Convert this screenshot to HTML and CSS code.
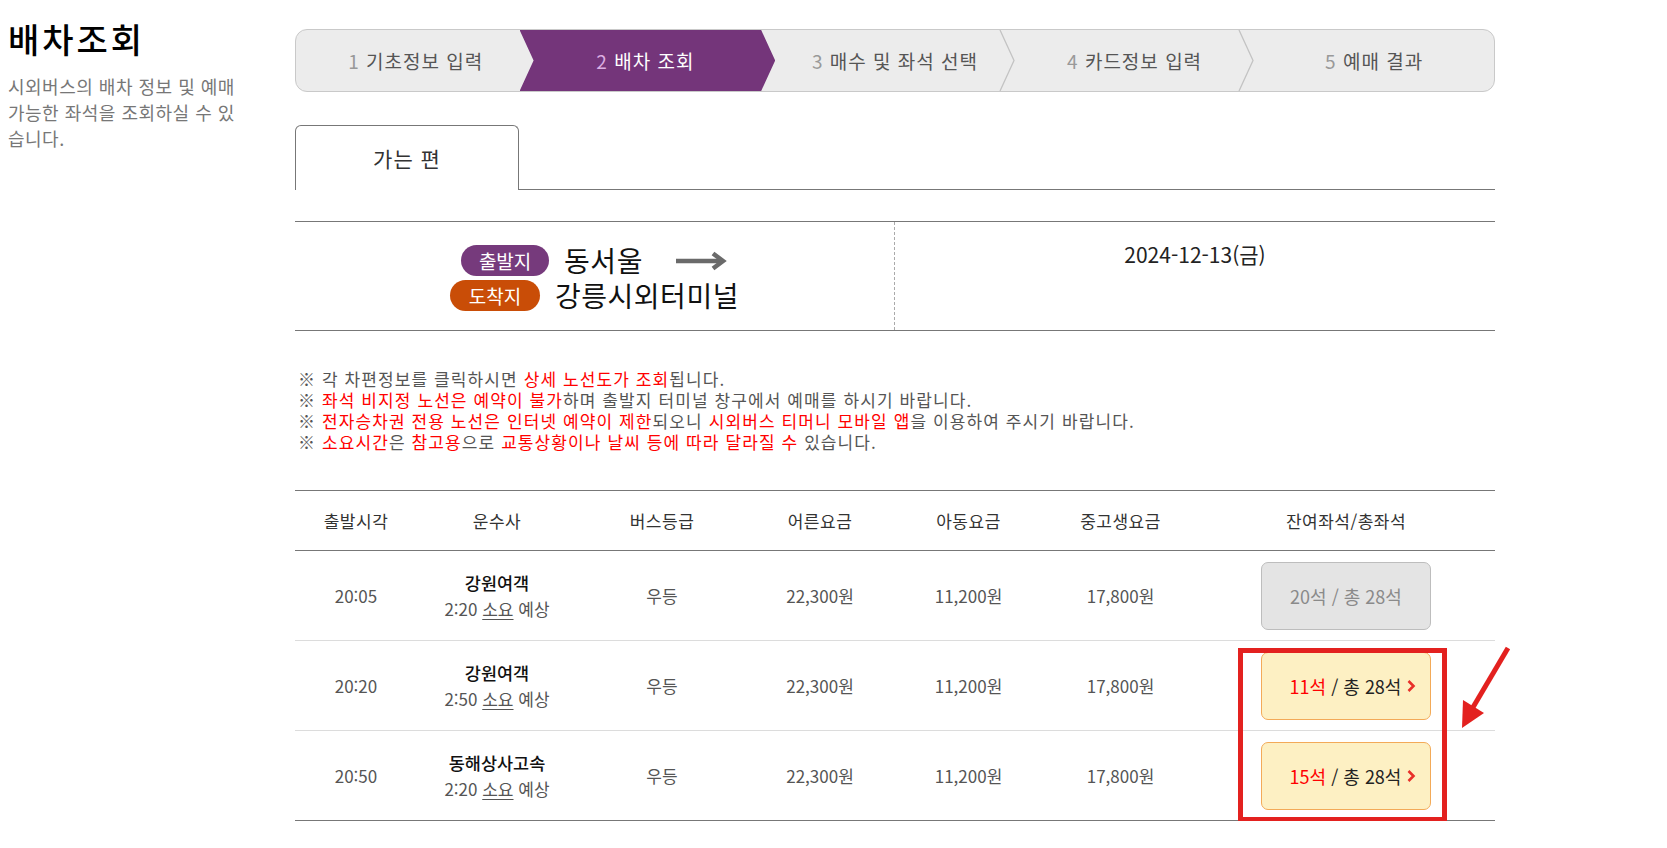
FILE: index.html
```html
<!DOCTYPE html>
<html lang="ko">
<head>
<meta charset="utf-8">
<title>배차조회</title>
<link rel="stylesheet" href="styles.css">
</head>
<body>
<div class="page">
  <aside class="side">
    <h1 class="side-title">배차조회</h1>
    <p class="side-desc">시외버스의 배차 정보 및 예매 가능한 좌석을 조회하실 수 있습니다.</p>
  </aside>
  <main class="main">
    <ol class="steps">
      <li class="step"><span class="step-label"><span class="num">1</span> 기초정보 입력</span><svg class="sep" viewBox="0 0 16 61" preserveAspectRatio="none"><polyline points="1,0 15,30.5 1,61"/></svg></li>
      <li class="step active"><span class="step-label"><span class="num">2</span> 배차 조회</span></li>
      <li class="step"><span class="step-label"><span class="num">3</span> 매수 및 좌석 선택</span><svg class="sep" viewBox="0 0 16 61" preserveAspectRatio="none"><polyline points="1,0 15,30.5 1,61"/></svg></li>
      <li class="step"><span class="step-label"><span class="num">4</span> 카드정보 입력</span><svg class="sep" viewBox="0 0 16 61" preserveAspectRatio="none"><polyline points="1,0 15,30.5 1,61"/></svg></li>
      <li class="step"><span class="step-label"><span class="num">5</span> 예매 결과</span></li>
    </ol>

    <div class="tabs"><div class="tab">가는 편</div></div>

    <div class="route">
      <div class="route-left">
        <div class="route-row">
          <span class="pill dep">출발지</span>
          <span class="place">동서울</span>
          <svg class="route-arrow" viewBox="0 0 52 20"><line x1="0" y1="10" x2="46" y2="10"/><polyline points="37,2.5 47,10 37,17.5"/></svg>
        </div>
        <div class="route-row">
          <span class="pill arr">도착지</span>
          <span class="place">강릉시외터미널</span>
        </div>
      </div>
      <div class="route-right">
        <div class="date">2024-12-13(금)</div>
      </div>
    </div>

    <ul class="notes">
      <li>※ 각 차편정보를 클릭하시면 <em>상세 노선도가 조회</em>됩니다.</li>
      <li>※ <em>좌석 비지정 노선은 예약이 불가</em>하며 출발지 터미널 창구에서 예매를 하시기 바랍니다.</li>
      <li>※ <em>전자승차권 전용 노선은 인터넷 예약이 제한</em>되오니 <em>시외버스 티머니 모바일 앱</em>을 이용하여 주시기 바랍니다.</li>
      <li>※ <em>소요시간</em>은 <em>참고용</em>으로 <em>교통상황이나 날씨 등에 따라 달라질 수</em> 있습니다.</li>
    </ul>

    <div class="table-wrap">
      <table class="bus-table">
        <colgroup>
          <col class="c-time"><col class="c-comp"><col class="c-grade"><col class="c-adult"><col class="c-child"><col class="c-teen"><col class="c-seat">
        </colgroup>
        <thead>
          <tr><th>출발시각</th><th>운수사</th><th>버스등급</th><th>어른요금</th><th>아동요금</th><th>중고생요금</th><th>잔여좌석/총좌석</th></tr>
        </thead>
        <tbody>
          <tr>
            <td>20:05</td>
            <td><div class="comp">강원여객</div><div class="dur">2:20 <u>소요</u> 예상</div></td>
            <td>우등</td><td>22,300원</td><td>11,200원</td><td>17,800원</td>
            <td><span class="seat-btn off">20석 / 총 28석</span></td>
          </tr>
          <tr>
            <td>20:20</td>
            <td><div class="comp">강원여객</div><div class="dur">2:50 <u>소요</u> 예상</div></td>
            <td>우등</td><td>22,300원</td><td>11,200원</td><td>17,800원</td>
            <td><span class="seat-btn on"><span class="left">11석</span>&nbsp;/ 총 28석<svg class="go" viewBox="0 0 10 14"><polyline points="2.5,2 7.5,7 2.5,12"/></svg></span></td>
          </tr>
          <tr>
            <td>20:50</td>
            <td><div class="comp">동해상사고속</div><div class="dur">2:20 <u>소요</u> 예상</div></td>
            <td>우등</td><td>22,300원</td><td>11,200원</td><td>17,800원</td>
            <td><span class="seat-btn on"><span class="left">15석</span>&nbsp;/ 총 28석<svg class="go" viewBox="0 0 10 14"><polyline points="2.5,2 7.5,7 2.5,12"/></svg></span></td>
          </tr>
        </tbody>
      </table>
      <div class="highlight"></div>
      <svg class="pointer" viewBox="0 0 60 95"><line x1="53" y1="8" x2="17" y2="69"/><polygon points="7,88 8,60 29,73"/></svg>
    </div>
  </main>
</div>
</body>
</html>
```

FILE: styles.css
```css
* { box-sizing: border-box; }

html, body {
  margin: 0;
  padding: 0;
  background: #fff;
}

body {
  font-family: "Noto Sans CJK KR", "Noto Sans", sans-serif;
  color: #555;
}

.page {
  display: flex;
  align-items: flex-start;
}

/* ---------- sidebar ---------- */
.side {
  flex: 0 0 295px;
  padding: 19px 0 0 8px;
}

.side-title {
  margin: 0;
  font-size: 34px;
  line-height: 40px;
  font-weight: 500;
  letter-spacing: 3px;
  color: #000;
}

.side-desc {
  margin: 14px 0 0;
  width: 232px;
  font-size: 18px;
  line-height: 26px;
  letter-spacing: 0.5px;
  color: #777;
}

/* ---------- main ---------- */
.main {
  flex: 0 0 1200px;
  width: 1200px;
  padding-top: 29px;
}

/* steps */
.steps {
  list-style: none;
  margin: 0;
  padding: 0;
  display: flex;
  height: 63px;
  border: 1px solid #c9c9c9;
  border-radius: 12px;
  background: #ececec;
  overflow: hidden;
}

.step {
  position: relative;
  flex: 1 1 0;
  min-width: 0;
  display: flex;
  align-items: center;
  justify-content: center;
  font-size: 19px;
  letter-spacing: 1px;
  color: #555;
}

.step-label {
  position: relative;
  z-index: 2;
  white-space: nowrap;
}

.step .num {
  color: #999;
}

.step .sep {
  position: absolute;
  top: 0;
  right: 0;
  width: 16px;
  height: 100%;
  z-index: 1;
}

.step .sep polyline {
  fill: none;
  stroke: #c3c3c3;
  stroke-width: 1.3;
}

.step.active {
  color: #fff;
}

.step.active .step-label {
  margin-right: 20px;
}

.step.active .num {
  color: #dcaee2;
}

.step.active::before {
  content: "";
  position: absolute;
  top: 0;
  bottom: 0;
  left: -16px;
  right: 0;
  background: #74357a;
  clip-path: polygon(0 0, calc(100% - 14px) 0, 100% 50%, calc(100% - 14px) 100%, 0 100%, 14px 50%);
  z-index: 1;
}

/* tab */
.tabs {
  margin-top: 33px;
  display: flex;
  border-bottom: 1px solid #777;
}

.tab {
  width: 224px;
  height: 65px;
  margin-bottom: -1px;
  border: 1px solid #777;
  border-bottom: 0;
  border-radius: 6px 6px 0 0;
  background: #fff;
  display: flex;
  align-items: center;
  justify-content: center;
  font-size: 21px;
  letter-spacing: 1px;
  color: #333;
}

/* route */
.route {
  margin-top: 31px;
  display: grid;
  grid-template-columns: 599px 1fr;
  height: 110px;
  border-top: 1px solid #777;
  border-bottom: 1px solid #777;
}

.route-left {
  display: flex;
  flex-direction: column;
  justify-content: center;
  align-items: center;
  gap: 4px;
  padding-top: 4px;
}

.route-row {
  display: flex;
  align-items: center;
  gap: 15px;
  height: 31px;
}

.pill {
  display: inline-block;
  width: 88px;
  height: 31px;
  line-height: 31px;
  border-radius: 16px;
  text-align: center;
  font-size: 19px;
  color: #fff;
}

.pill.dep { background: #763a7c; }
.pill.arr { background: #c94d07; width: 90px; }

.place {
  font-size: 28px;
  line-height: 31px;
  letter-spacing: 0.5px;
  color: #111;
}

.route-arrow {
  width: 52px;
  height: 20px;
  margin-left: 18px;
}

.route-arrow line,
.route-arrow polyline {
  fill: none;
  stroke: #6a6a6a;
  stroke-width: 4.5;
}

.route-right {
  border-left: 1px dashed #aaa;
  text-align: center;
  padding-top: 19px;
}

.date {
  font-size: 21px;
  line-height: 26px;
  color: #222;
}

/* notes */
.notes {
  list-style: none;
  margin: 37px 0 0;
  padding: 0 0 0 3px;
  font-size: 17px;
  line-height: 21px;
  letter-spacing: 1.1px;
  color: #555;
}

.notes em {
  font-style: normal;
  color: #ff0000;
}

/* table */
.table-wrap {
  position: relative;
  margin-top: 38px;
}

.bus-table {
  width: 1200px;
  border-collapse: collapse;
  table-layout: fixed;
  border-top: 1px solid #777;
  border-bottom: 1px solid #777;
}

.c-time { width: 122px; }
.c-comp { width: 160px; }
.c-grade { width: 170px; }
.c-adult { width: 146px; }
.c-child { width: 151px; }
.c-teen { width: 153px; }
.c-seat { width: 298px; }

.bus-table th {
  height: 60px;
  font-size: 17px;
  font-weight: 400;
  letter-spacing: 0.5px;
  color: #333;
  border-bottom: 1px solid #777;
  text-align: center;
  padding: 0;
}

.bus-table td {
  height: 90px;
  padding: 0;
  text-align: center;
  font-size: 17px;
  color: #555;
  border-bottom: 1px solid #dcdcdc;
}

.bus-table tr:last-child td {
  border-bottom: 1px solid #777;
}

.comp {
  font-size: 17.5px;
  line-height: 26px;
  font-weight: 500;
  color: #111;
}

.dur {
  font-size: 17px;
  line-height: 26px;
  color: #555;
}

.dur u {
  text-underline-offset: 3px;
}

.seat-btn {
  display: inline-flex;
  align-items: center;
  justify-content: center;
  width: 170px;
  height: 68px;
  border: 1px solid #bdbdbd;
  border-radius: 7px;
  font-size: 18px;
  vertical-align: middle;
  white-space: nowrap;
}

.seat-btn.off {
  background: #e4e4e4;
  color: #8a8a8a;
}

.seat-btn.on {
  background: #fdf0c3;
  border-color: #f3aa58;
  color: #222;
  padding-left: 14px;
}

.seat-btn .left {
  color: #ff0000;
}

.seat-btn .go {
  width: 10px;
  height: 14px;
  margin-left: 5px;
}

.seat-btn .go polyline {
  fill: none;
  stroke: #e8302a;
  stroke-width: 2.6;
}

/* annotation overlay */
.highlight {
  position: absolute;
  left: 943px;
  top: 158px;
  width: 209px;
  height: 174px;
  border: 5px solid #e3211f;
  pointer-events: none;
}

.pointer {
  position: absolute;
  left: 1160px;
  top: 150px;
  width: 60px;
  height: 95px;
  overflow: visible;
}

.pointer line {
  stroke: #e3211f;
  stroke-width: 5;
}

.pointer polygon {
  fill: #e3211f;
}
```
